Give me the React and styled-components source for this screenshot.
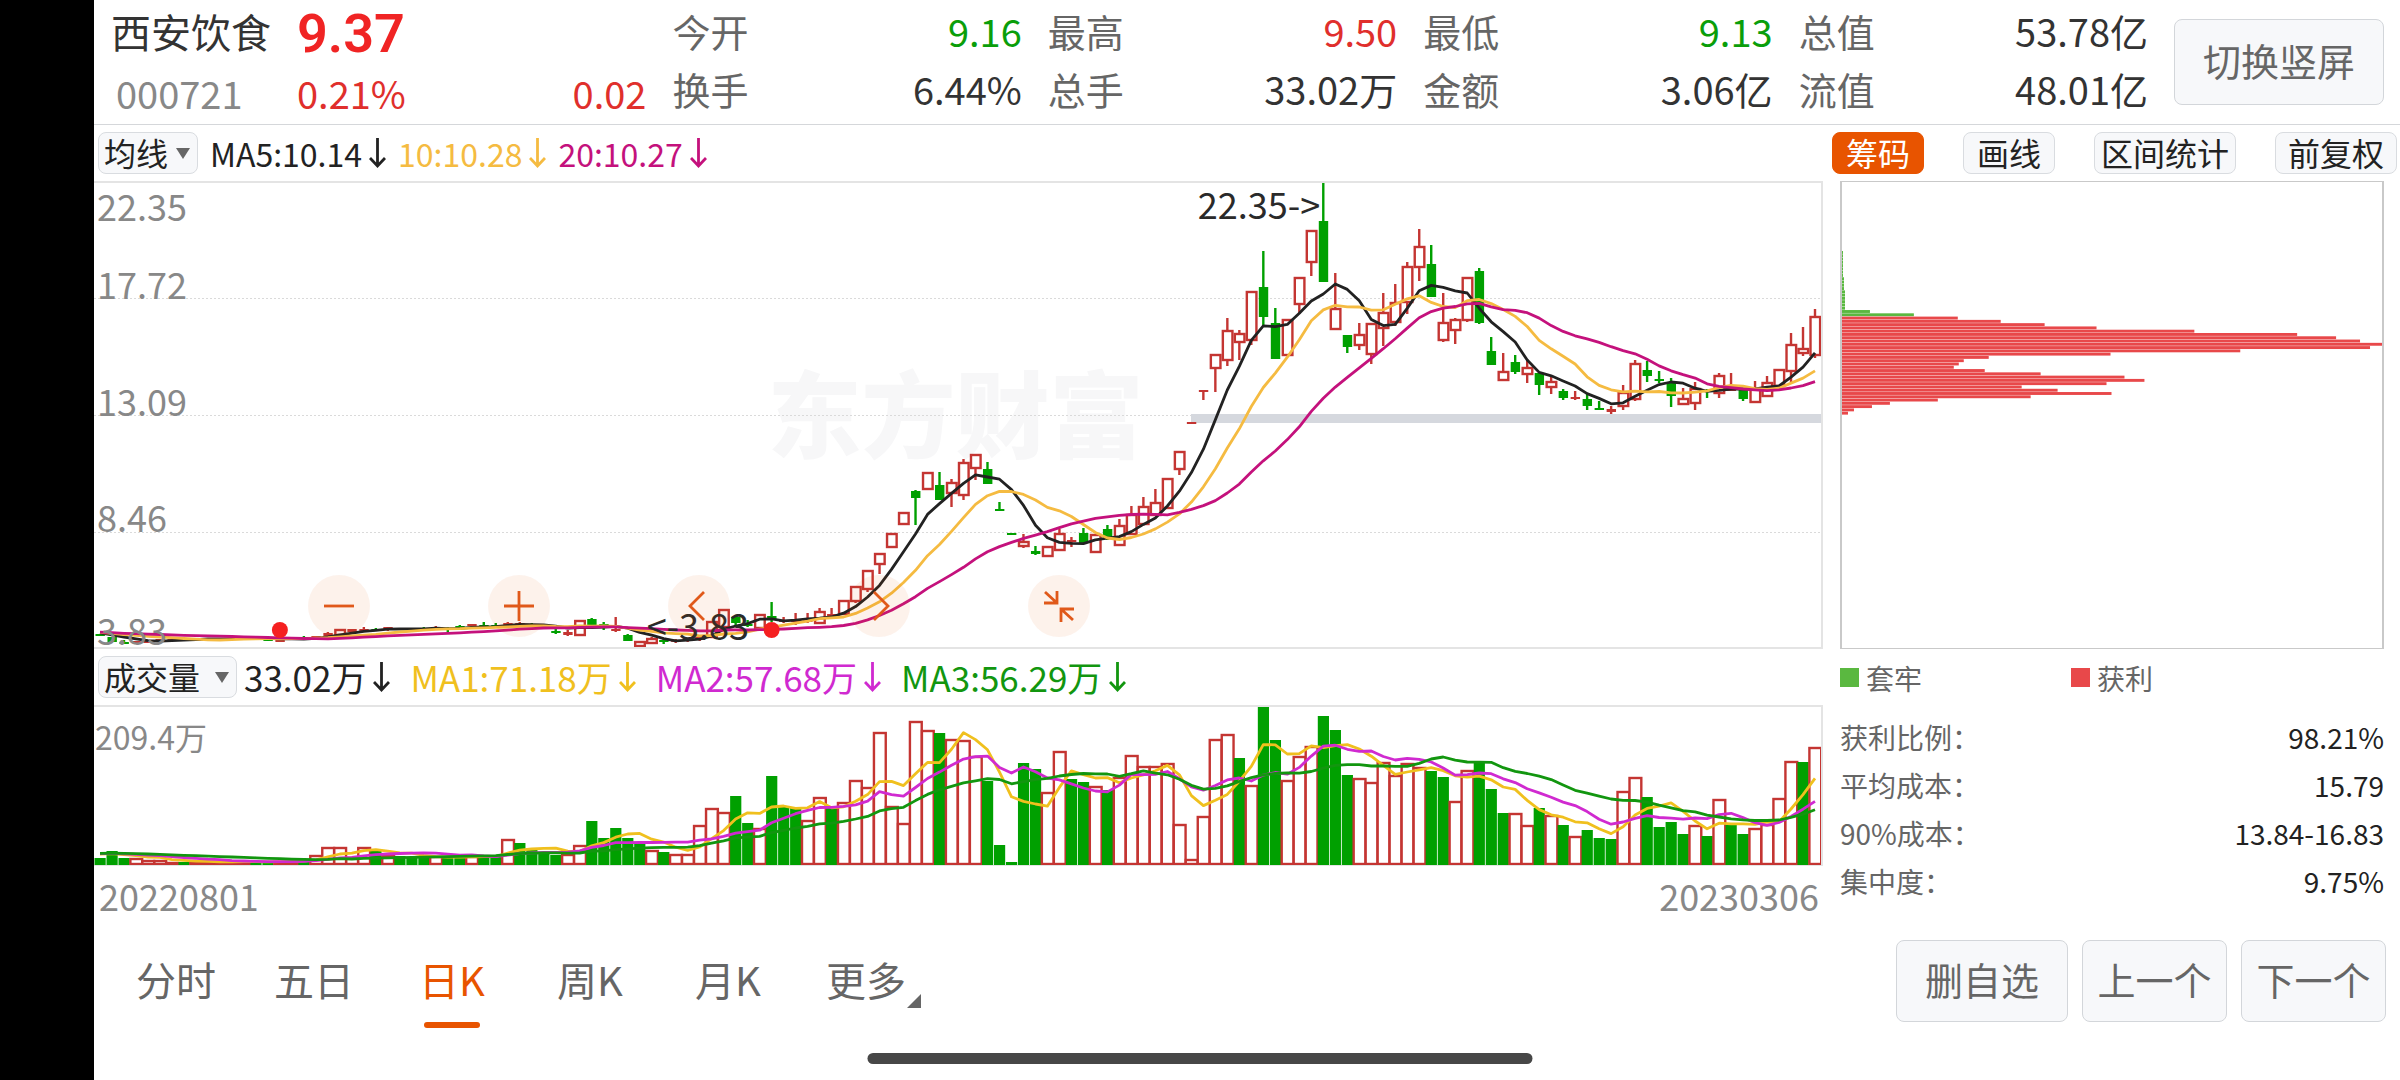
import React from 'react';
import styled, { createGlobalStyle } from 'styled-components';

const GlobalStyle = createGlobalStyle`
  * {
    box-sizing: border-box;
  }

  body {
    margin: 0;
    background: #fff;
    color: #333;
    font-family: 'Noto Sans CJK SC', 'Noto Sans', sans-serif;
  }

  button,
  select {
    font-family: inherit;
  }
`;

const RED = '#c43532';
const GREEN = '#00a000';
const ORANGE = '#e85400';

// [up, high, body top, body bottom, low, volume], heights in plot units
const candles = [
  [0, 452, 452, 454, 454, 7],
  [0, 455, 455, 460, 460, 14],
  [0, 458, 460, 461, 462, 7],
  [1, 459, 459, 461, 461, 7],
  [1, 458, 459, 461, 461, 5],
  [1, 457, 457, 459, 459, 5],
  [1, 457, 457, 458, 458, 3],
  [0, 456, 457, 458, 459, 3],
  [1, 457, 457, 459, 459, 3],
  [1, 456, 456, 458, 458, 4],
  [1, 456, 456, 457, 457, 3],
  [1, 455, 456, 457, 457, 3],
  [1, 455, 455, 457, 457, 4],
  [0, 455, 456, 457, 458, 3],
  [0, 455, 457, 458, 459, 3],
  [1, 455, 458, 459, 459, 4],
  [1, 455, 456, 458, 458, 4],
  [0, 454, 455, 456, 458, 5],
  [1, 454, 454, 455, 456, 10],
  [1, 450, 451, 454, 455, 18],
  [1, 448, 448, 453, 453, 18],
  [1, 447, 447, 450, 450, 8],
  [1, 445, 447, 449, 450, 18],
  [0, 446, 447, 449, 449, 15],
  [1, 445, 445, 448, 449, 10],
  [0, 446, 446, 447, 448, 9],
  [0, 446, 446, 447, 448, 7],
  [0, 445, 446, 447, 448, 7],
  [1, 444, 445, 446, 448, 9],
  [0, 445, 446, 447, 450, 8],
  [0, 443, 444, 446, 446, 8],
  [1, 442, 442, 444, 445, 9],
  [0, 440, 443, 444, 446, 8],
  [0, 441, 443, 444, 446, 9],
  [1, 440, 441, 443, 444, 26],
  [1, 440, 441, 443, 444, 22],
  [0, 441, 442, 443, 444, 15],
  [0, 443, 444, 445, 446, 11],
  [0, 447, 449, 451, 452, 10],
  [1, 448, 450, 453, 454, 11],
  [1, 438, 439, 453, 453, 20],
  [0, 436, 437, 443, 443, 44],
  [0, 440, 442, 443, 448, 27],
  [1, 435, 447, 449, 450, 37],
  [0, 452, 453, 459, 459, 27],
  [1, 459, 460, 464, 467, 23],
  [1, 455, 457, 461, 462, 15],
  [0, 456, 458, 460, 462, 13],
  [1, 457, 458, 460, 461, 11],
  [1, 456, 456, 459, 460, 11],
  [1, 454, 455, 458, 459, 40],
  [1, 440, 440, 455, 455, 57],
  [1, 428, 428, 445, 445, 53],
  [0, 434, 435, 441, 444, 69],
  [0, 438, 442, 444, 445, 42],
  [1, 433, 433, 446, 446, 37],
  [0, 420, 434, 438, 440, 89],
  [1, 435, 438, 440, 441, 58],
  [1, 431, 438, 440, 443, 57],
  [1, 431, 437, 440, 441, 45],
  [1, 426, 430, 441, 442, 68],
  [1, 426, 432, 435, 437, 58],
  [1, 419, 419, 432, 432, 63],
  [1, 405, 405, 419, 421, 85],
  [1, 389, 389, 407, 410, 78],
  [1, 372, 372, 382, 392, 133],
  [1, 352, 352, 365, 365, 59],
  [1, 331, 331, 342, 342, 42],
  [0, 308, 309, 316, 343, 144],
  [1, 291, 291, 307, 307, 135],
  [0, 290, 303, 318, 318, 132],
  [1, 297, 301, 311, 325, 126],
  [1, 277, 281, 313, 318, 125],
  [1, 273, 273, 286, 298, 109],
  [0, 280, 287, 302, 302, 84],
  [0, 320, 327, 329, 329, 20],
  [0, 351, 351, 353, 353, 3],
  [1, 352, 360, 364, 366, 102],
  [0, 364, 369, 372, 373, 96],
  [1, 365, 365, 374, 374, 73],
  [1, 347, 352, 368, 369, 114],
  [1, 355, 358, 360, 365, 86],
  [0, 346, 351, 361, 361, 83],
  [1, 353, 353, 370, 370, 79],
  [0, 343, 347, 357, 358, 75],
  [1, 337, 344, 363, 363, 88],
  [1, 324, 333, 352, 353, 110],
  [1, 315, 325, 342, 343, 99],
  [1, 307, 321, 333, 333, 99],
  [1, 297, 297, 326, 326, 102],
  [1, 270, 270, 287, 293, 41],
  [1, 240, 240, 242, 242, 6],
  [1, 208, 208, 210, 218, 49],
  [1, 173, 173, 186, 210, 126],
  [1, 136, 149, 178, 184, 131],
  [1, 148, 152, 160, 178, 107],
  [1, 110, 110, 158, 163, 80],
  [0, 69, 105, 135, 143, 158],
  [0, 126, 141, 177, 177, 125],
  [1, 138, 138, 173, 173, 85],
  [1, 96, 96, 122, 132, 109],
  [1, 49, 49, 80, 94, 119],
  [0, 0, 39, 100, 100, 149],
  [1, 91, 127, 147, 147, 135],
  [0, 153, 153, 165, 171, 90],
  [1, 141, 153, 163, 168, 87],
  [1, 142, 142, 172, 182, 83],
  [1, 111, 131, 146, 164, 103],
  [1, 102, 121, 140, 144, 90],
  [1, 80, 85, 120, 132, 102],
  [1, 47, 65, 85, 99, 98],
  [0, 63, 82, 115, 115, 94],
  [1, 111, 141, 158, 160, 88],
  [1, 136, 138, 148, 162, 64],
  [1, 96, 96, 138, 140, 95],
  [0, 86, 89, 141, 142, 103],
  [0, 155, 169, 183, 183, 76],
  [1, 171, 190, 198, 198, 52],
  [0, 173, 180, 190, 192, 52],
  [1, 179, 186, 192, 201, 40],
  [0, 191, 191, 203, 213, 57],
  [1, 195, 200, 205, 212, 50],
  [0, 207, 209, 216, 218, 40],
  [1, 209, 215, 217, 218, 29],
  [0, 211, 217, 224, 228, 35],
  [0, 219, 226, 227, 228, 27],
  [1, 224, 227, 230, 232, 26],
  [1, 203, 211, 224, 228, 74],
  [1, 178, 182, 217, 219, 88],
  [0, 179, 188, 194, 200, 68],
  [0, 189, 197, 199, 201, 38],
  [0, 196, 201, 214, 225, 43],
  [1, 206, 217, 222, 223, 31],
  [1, 200, 207, 221, 228, 40],
  [0, 207, 208, 210, 216, 29],
  [1, 191, 194, 211, 216, 66],
  [1, 191, 207, 209, 209, 40],
  [0, 207, 208, 217, 219, 31],
  [1, 199, 207, 220, 220, 37],
  [1, 194, 201, 214, 214, 41],
  [1, 187, 188, 204, 204, 67],
  [1, 151, 163, 189, 200, 104],
  [1, 145, 167, 171, 174, 103],
  [1, 127, 135, 173, 176, 118],
];

// days whose volume bar is coloured against its candle
const swapped = new Set([
  35, 43, 45, 57, 58, 61, 68, 77, 81, 95, 103, 112, 117, 118, 126, 132, 136, 142,
]);

const volumeUp = ([up], i) => Boolean(up) !== swapped.has(i);

const chipsAbove = [1, 1, 1, 1, 1, 1, 1, 1, 2, 2, 2, 2, 3, 3, 3, 3, 3, 3, 28, 72];
const chipsBelow = [
  116, 159, 203, 255, 353, 456, 495, 519, 543, 529, 399, 269, 147, 122, 117, 112,
  143, 199, 283, 303, 265, 180, 216, 270, 189, 96, 48, 30, 12, 6,
];

const PLOT_WIDTH = 1727;
const STEP = PLOT_WIDTH / candles.length;
const centre = (i) => (i + 0.5) * STEP;

const average = (values, days, before) =>
  values.map((_, i) => {
    let sum = 0;
    for (let k = 0; k < days; k += 1) {
      sum += i - k >= 0 ? values[i - k] : before;
    }
    return sum / days;
  });

const toPoints = (values) =>
  values.map((y, i) => `${centre(i).toFixed(1)},${y.toFixed(1)}`).join(' ');

const closes = candles.map(([up, , top, bottom]) => (up ? top : bottom));
const volumes = candles.map((c) => c[5]);

const Page = styled.div`
  position: relative;
  min-height: 100vh;
  border-left: 94px solid #000;
`;

const Header = styled.header`
  display: flex;
  align-items: center;
  gap: 26px;
  height: 125px;
  padding: 0 16px 0 17px;
  border-bottom: 1px solid #d5d7da;
`;

const Stock = styled.div`
  display: grid;
  flex: 1 1 186px;
  grid-template-columns: 186px 1fr;
  grid-template-rows: 62px 62px;
  align-items: center;
`;

const StockName = styled.h1`
  margin: 0;
  font-size: 40px;
  font-weight: 400;
  line-height: 60px;
`;

const StockCode = styled.span`
  padding-left: 5px;
  color: #888;
  font-size: 38px;
  line-height: 60px;
`;

const Price = styled.strong`
  padding-top: 6px;
  color: #f02424;
  font-family: Roboto, sans-serif;
  font-size: 54px;
  font-weight: 600;
  line-height: 60px;
`;

const Change = styled.div`
  display: flex;
  justify-content: space-between;
  color: #e02f2c;
  font-size: 38px;
  line-height: 60px;
`;

const Stat = styled.dl`
  display: grid;
  flex: 1 1 0;
  grid-template-columns: auto 1fr;
  margin: 0 0 4px;
  font-size: 38px;
  line-height: 58px;

  dt {
    color: #666;
  }

  dd {
    margin: 0;
    text-align: right;
  }
`;

const Value = styled.dd`
  color: ${(props) => props.$color || '#333'};
`;

const Button = styled.button`
  width: ${(props) => props.$width}px;
  height: ${(props) => props.$height || 82}px;
  padding: 0 0 4px;
  border: 1px solid #d3d6da;
  border-radius: 8px;
  background: #f7f8fa;
  color: #666;
  font-size: 38px;
  line-height: 56px;
`;

const Toolbar = styled.div`
  display: flex;
  align-items: center;
  justify-content: space-between;
  height: 56px;
  padding: 0 3px 0 4px;
`;

const Legend = styled.div`
  display: flex;
  align-items: center;
  gap: ${(props) => props.$gap}px;
  font-size: ${(props) => props.$size}px;
  line-height: 40px;
  white-space: nowrap;
`;

const Average = styled.span`
  display: flex;
  align-items: center;
  gap: 7px;
  color: ${(props) => props.$color};
`;

const Picker = styled.label`
  position: relative;
  display: block;

  &::after {
    content: '';
    position: absolute;
    top: 16px;
    right: 8px;
    border: 7px solid transparent;
    border-top: 11px solid #666;
    border-bottom: 0;
    pointer-events: none;
  }
`;

const Select = styled.select`
  display: block;
  width: ${(props) => props.$width}px;
  height: 42px;
  padding: 0 0 2px 5px;
  appearance: none;
  border: 1px solid #d9dce0;
  border-radius: 8px;
  background: #f7f8fa;
  color: #222;
  font-size: 32px;
  line-height: 38px;
`;

const Tools = styled.div`
  display: flex;
  gap: 39px;
`;

const Tool = styled.button`
  width: ${(props) => props.$width}px;
  height: 42px;
  padding: 0 0 2px;
  border: 1px solid ${(props) => (props.$active ? ORANGE : '#d9dce0')};
  border-radius: 8px;
  background: ${(props) => (props.$active ? ORANGE : '#f7f8fa')};
  color: ${(props) => (props.$active ? '#fff' : '#222')};
  font-size: 32px;
  line-height: 36px;
`;

const Main = styled.main`
  display: grid;
  grid-template-columns: minmax(0, 1fr) 544px;
  gap: 17px;
  padding-right: 16px;
`;

const Plot = styled.div`
  position: relative;
  height: ${(props) => props.$height}px;
  border: solid #e4e4e4;
  border-width: 2px 2px ${(props) => props.$bottom}px 0;

  > svg {
    position: relative;
    display: block;
    width: 100%;
    height: 100%;
  }
`;

const Watermark = styled.span`
  position: absolute;
  top: 49%;
  left: 39%;
  transform: translateY(-50%);
  color: #f7f7f8;
  font-size: 94px;
  font-weight: 900;
  line-height: 120px;
`;

const AxisLabel = styled.span`
  position: absolute;
  top: ${(props) => props.$top}px;
  left: ${(props) => props.$left || 3}px;
  color: #888;
  font-size: ${(props) => props.$size || 36}px;
  line-height: 40px;
`;

const Mark = styled.span`
  position: absolute;
  top: ${(props) => props.$top}px;
  ${(props) => props.$side}: ${(props) => props.$at}%;
  color: #2a2a2a;
  font-size: 36px;
  line-height: 40px;
`;

const Controls = styled.div`
  position: absolute;
  bottom: 10px;
  left: 214px;
  display: flex;
  gap: 118px;
`;

const RoundButton = styled.button`
  width: 62px;
  height: 62px;
  padding: 0;
  border: 0;
  border-radius: 50%;
  background: rgba(232, 84, 0, 0.08);

  svg {
    display: block;
  }
`;

const Dates = styled.div`
  display: flex;
  align-items: center;
  justify-content: space-between;
  height: 64px;
  padding: 0 4px 6px 5px;
  color: #888;
  font-size: 36px;
  line-height: 48px;
`;

const ChipBox = styled.div`
  height: 468px;
  border: solid #c9c9c9;
  border-width: 1px 2px;

  svg {
    display: block;
    width: 100%;
    height: 100%;
  }
`;

const ChipLegend = styled.div`
  display: grid;
  grid-template-columns: 231px 1fr;
  align-items: center;
  height: 64px;
  padding-bottom: 7px;
  color: #666;
  font-size: 28px;
  line-height: 40px;
`;

const ChipKey = styled.span`
  display: flex;
  align-items: center;
  gap: 7px;

  &::before {
    content: '';
    width: 19px;
    height: 19px;
    background: ${(props) => props.$color};
  }
`;

const Metric = styled.dl`
  display: flex;
  justify-content: space-between;
  margin: 0;
  font-size: 28px;
  line-height: 48px;

  dt {
    color: #666;
  }

  dd {
    margin: 0;
    color: #222;
  }
`;

const Footer = styled.footer`
  display: flex;
  align-items: center;
  justify-content: space-between;
  height: 102px;
  padding: 0 14px 0 13px;
`;

const Tabs = styled.nav`
  display: flex;
`;

const Tab = styled.a`
  position: relative;
  width: 138px;
  height: 102px;
  color: ${(props) => (props.$active ? ORANGE : '#666')};
  font-size: 40px;
  line-height: 98px;
  text-align: center;
  text-decoration: none;

  &::after {
    content: '';
    position: absolute;
    bottom: 4px;
    left: 41px;
    width: 56px;
    height: 6px;
    border-radius: 3px;
    background: ${(props) => (props.$active ? ORANGE : 'transparent')};
  }
`;

const Corner = styled.svg`
  position: absolute;
  right: 14px;
  bottom: 24px;
`;

const Actions = styled.div`
  display: flex;
  gap: 14px;
`;

const HomeBar = styled.div`
  position: absolute;
  bottom: 16px;
  left: calc(50% - 47px);
  width: 665px;
  height: 11px;
  border-radius: 6px;
  background: #474747;
  transform: translateX(-50%);
`;

function Arrow() {
  return (
    <svg width="17" height="32" viewBox="0 0 17 32" fill="none" stroke="currentColor" strokeWidth="2.8">
      <path d="M8.5 1v28M1 21l7.5 8 7.5-8" />
    </svg>
  );
}

function Line({ values, color }) {
  return (
    <polyline
      points={toPoints(values)}
      fill="none"
      stroke={color}
      strokeWidth="2.8"
      strokeLinejoin="round"
    />
  );
}

function Candle({ x, up, high, top, bottom, low }) {
  const color = up ? RED : GREEN;
  const hollow = up && bottom - top > 3;
  return (
    <g>
      <line x1={x} x2={x} y1={high} y2={low} stroke={color} strokeWidth="2.4" />
      {hollow ? (
        <rect
          x={x - 4.5}
          y={top}
          width="9.6"
          height={bottom - top}
          fill="#fff"
          stroke={color}
          strokeWidth="2.4"
        />
      ) : (
        <rect x={x - 4.5} y={top} width="9.4" height={Math.max(bottom - top, 2)} fill={color} />
      )}
    </g>
  );
}

function PriceChart() {
  return (
    <svg viewBox={`0 1 ${PLOT_WIDTH} 464`} preserveAspectRatio="none">
      {[116.5, 233.5, 350.5].map((y) => (
        <line
          key={y}
          x1="0"
          x2={PLOT_WIDTH}
          y1={y}
          y2={y}
          stroke="#dadada"
          strokeDasharray="2 2"
        />
      ))}
      <rect x="1097" y="232" width="630" height="9" fill="#d5d8de" />
      {candles.map(([up, high, top, bottom, low], i) => (
        <Candle
          key={i}
          x={centre(i)}
          up={up}
          high={high}
          top={top}
          bottom={bottom}
          low={low}
        />
      ))}
      <Line values={average(closes, 5, 450)} color="#222" />
      <Line values={average(closes, 10, 450)} color="#f5bb41" />
      <Line values={average(closes, 20, 450)} color="#c4117c" />
      {[15, 56].map((i) => (
        <circle key={i} cx={centre(i)} cy="448" r="8" fill="#f52020" />
      ))}
    </svg>
  );
}

function VolumeChart() {
  const line = (days) => average(volumes, days, 12).map((v) => 158 - v);
  return (
    <svg viewBox={`0 0 ${PLOT_WIDTH} 158`} preserveAspectRatio="none">
      {candles.map((candle, i) => {
        const volume = candle[5];
        return volumeUp(candle, i) ? (
          <rect
            key={i}
            x={centre(i) - 5.6}
            y={159 - volume}
            width="11.8"
            height={Math.max(volume - 2, 1)}
            fill="#fff"
            stroke={RED}
            strokeWidth="2.4"
          />
        ) : (
          <rect
            key={i}
            x={centre(i) - 5.5}
            y={158 - volume}
            width="11.2"
            height={volume}
            fill={GREEN}
          />
        );
      })}
      <Line values={line(5)} color="#f0c01e" />
      <Line values={line(10)} color="#d02ad0" />
      <Line values={line(20)} color="#12960f" />
    </svg>
  );
}

function ChipChart() {
  const pitch = 3.28;
  const rows = [...chipsAbove, ...chipsBelow];
  return (
    <svg viewBox="0 0 541 466" preserveAspectRatio="none">
      {rows.map((width, i) => (
        <rect
          key={i}
          x="0"
          y={69 + i * pitch}
          width={width}
          height="2.9"
          fill={i < chipsAbove.length ? '#5ab840' : '#e8484a'}
        />
      ))}
    </svg>
  );
}

const controls = [
  ['缩小', 'M16 31h30'],
  ['放大', 'M16 31h30M31 16v30'],
  ['左移', 'M36 17L22 31l14 14'],
  ['右移', 'M26 17l14 14-14 14'],
  ['收起', 'M17 17l12 11M16 28h13V16M45 45L33 34M46 34H33v13'],
];

function Quote() {
  const stats = [
    [['今开', '9.16', '#0a9e0a'], ['换手', '6.44%']],
    [['最高', '9.50', '#e02f2c'], ['总手', '33.02万']],
    [['最低', '9.13', '#0a9e0a'], ['金额', '3.06亿']],
    [['总值', '53.78亿'], ['流值', '48.01亿']],
  ];

  return (
    <Header>
      <Stock>
        <StockName>西安饮食</StockName>
        <Price>9.37</Price>
        <StockCode>000721</StockCode>
        <Change>
          <span>0.21%</span>
          <span>0.02</span>
        </Change>
      </Stock>
      {stats.map((rows) => (
        <Stat key={rows[0][0]}>
          {rows.map(([label, value, color]) => (
            <React.Fragment key={label}>
              <dt>{label}</dt>
              <Value $color={color}>{value}</Value>
            </React.Fragment>
          ))}
        </Stat>
      ))}
      <Button $width={210} $height={86}>
        切换竖屏
      </Button>
    </Header>
  );
}

function ChipPanel() {
  const metrics = [
    ['获利比例：', '98.21%'],
    ['平均成本：', '15.79'],
    ['90%成本：', '13.84-16.83'],
    ['集中度：', '9.75%'],
  ];

  return (
    <aside>
      <ChipBox>
        <ChipChart />
      </ChipBox>
      <ChipLegend>
        <ChipKey $color="#5ab840">套牢</ChipKey>
        <ChipKey $color="#e8484a">获利</ChipKey>
      </ChipLegend>
      {metrics.map(([label, value]) => (
        <Metric key={label}>
          <dt>{label}</dt>
          <dd>{value}</dd>
        </Metric>
      ))}
    </aside>
  );
}

function App() {
  const tabs = ['分时', '五日', '日K', '周K', '月K', '更多'];

  return (
    <>
      <GlobalStyle />
      <Page>
        <Quote />
        <Toolbar>
          <Legend $gap={12} $size={32}>
            <Picker>
              <Select $width={100} aria-label="指标">
                <option>均线</option>
              </Select>
            </Picker>
            <Average $color="#222">MA5:10.14<Arrow /></Average>
            <Average $color="#f5bb41">10:10.28<Arrow /></Average>
            <Average $color="#c4117c">20:10.27<Arrow /></Average>
          </Legend>
          <Tools>
            <Tool $width={92} $active>筹码</Tool>
            <Tool $width={92}>画线</Tool>
            <Tool $width={142}>区间统计</Tool>
            <Tool $width={122}>前复权</Tool>
          </Tools>
        </Toolbar>
        <Main>
          <section>
            <Plot $height={468} $bottom={2}>
              <Watermark>东方财富</Watermark>
              <PriceChart />
              <AxisLabel $top={2}>22.35</AxisLabel>
              <AxisLabel $top={80}>17.72</AxisLabel>
              <AxisLabel $top={197}>13.09</AxisLabel>
              <AxisLabel $top={313}>8.46</AxisLabel>
              <AxisLabel $top={426}>3.83</AxisLabel>
              <Mark $top={0} $side="right" $at={29}>22.35-&gt;</Mark>
              <Mark $top={421} $side="left" $at={32}>&lt;-3.83</Mark>
              <Controls>
                {controls.map(([name, d]) => (
                  <RoundButton key={name} aria-label={name}>
                    <svg width="62" height="62" fill="none" stroke="#e0591a" strokeWidth="2.8">
                      <path d={d} />
                    </svg>
                  </RoundButton>
                ))}
              </Controls>
            </Plot>
            <Toolbar>
              <Legend $gap={20} $size={35}>
                <Average $color="#222">
                  <Picker>
                    <Select $width={139} aria-label="副图指标">
                      <option>成交量</option>
                    </Select>
                  </Picker>
                  33.02万<Arrow />
                </Average>
                <Average $color="#f0c01e">MA1:71.18万<Arrow /></Average>
                <Average $color="#d02ad0">MA2:57.68万<Arrow /></Average>
                <Average $color="#12960f">MA3:56.29万<Arrow /></Average>
              </Legend>
            </Toolbar>
            <Plot $height={161} $bottom={1}>
              <VolumeChart />
              <AxisLabel $top={9} $left={1} $size={32}>209.4万</AxisLabel>
            </Plot>
            <Dates>
              <span>20220801</span>
              <span>20230306</span>
            </Dates>
          </section>
          <ChipPanel />
        </Main>
        <Footer>
          <Tabs>
            {tabs.map((tab) => (
              <Tab key={tab} href="#" $active={tab === '日K'}>
                {tab}
                {tab === '更多' && (
                  <Corner width="14" height="14">
                    <path d="M14 0v14H0z" fill="#666" />
                  </Corner>
                )}
              </Tab>
            ))}
          </Tabs>
          <Actions>
            <Button $width={172}>删自选</Button>
            <Button $width={145}>上一个</Button>
            <Button $width={145}>下一个</Button>
          </Actions>
        </Footer>
        <HomeBar />
      </Page>
    </>
  );
}

export default App;
